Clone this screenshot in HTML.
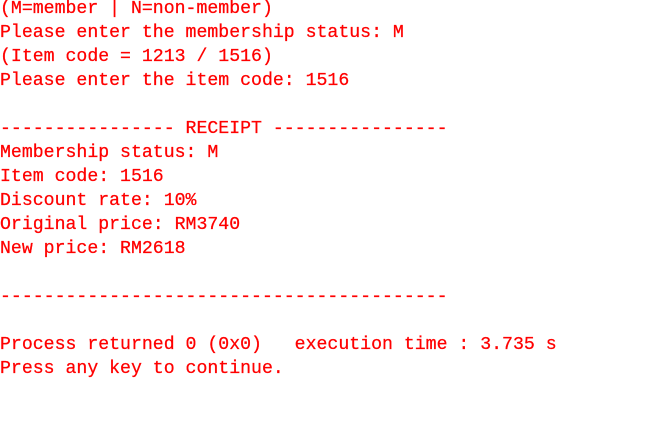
<!DOCTYPE html>
<html><head><style>
html,body{margin:0;background:#fff;width:649px;height:424px;overflow:hidden}
pre{margin:0;position:absolute;left:0;top:-3px;font-family:"Liberation Mono",monospace;font-size:18.2px;line-height:24px;color:#ff0000;-webkit-text-stroke:0.25px #ff0000}
</style></head><body><pre>(M=member | N=non-member)
Please enter the membership status: M
(Item code = 1213 / 1516)
Please enter the item code: 1516

---------------- RECEIPT ----------------
Membership status: M
Item code: 1516
Discount rate: 10%
Original price: RM3740
New price: RM2618

-----------------------------------------

Process returned 0 (0x0)   execution time : 3.735 s
Press any key to continue.
</pre></body></html>
